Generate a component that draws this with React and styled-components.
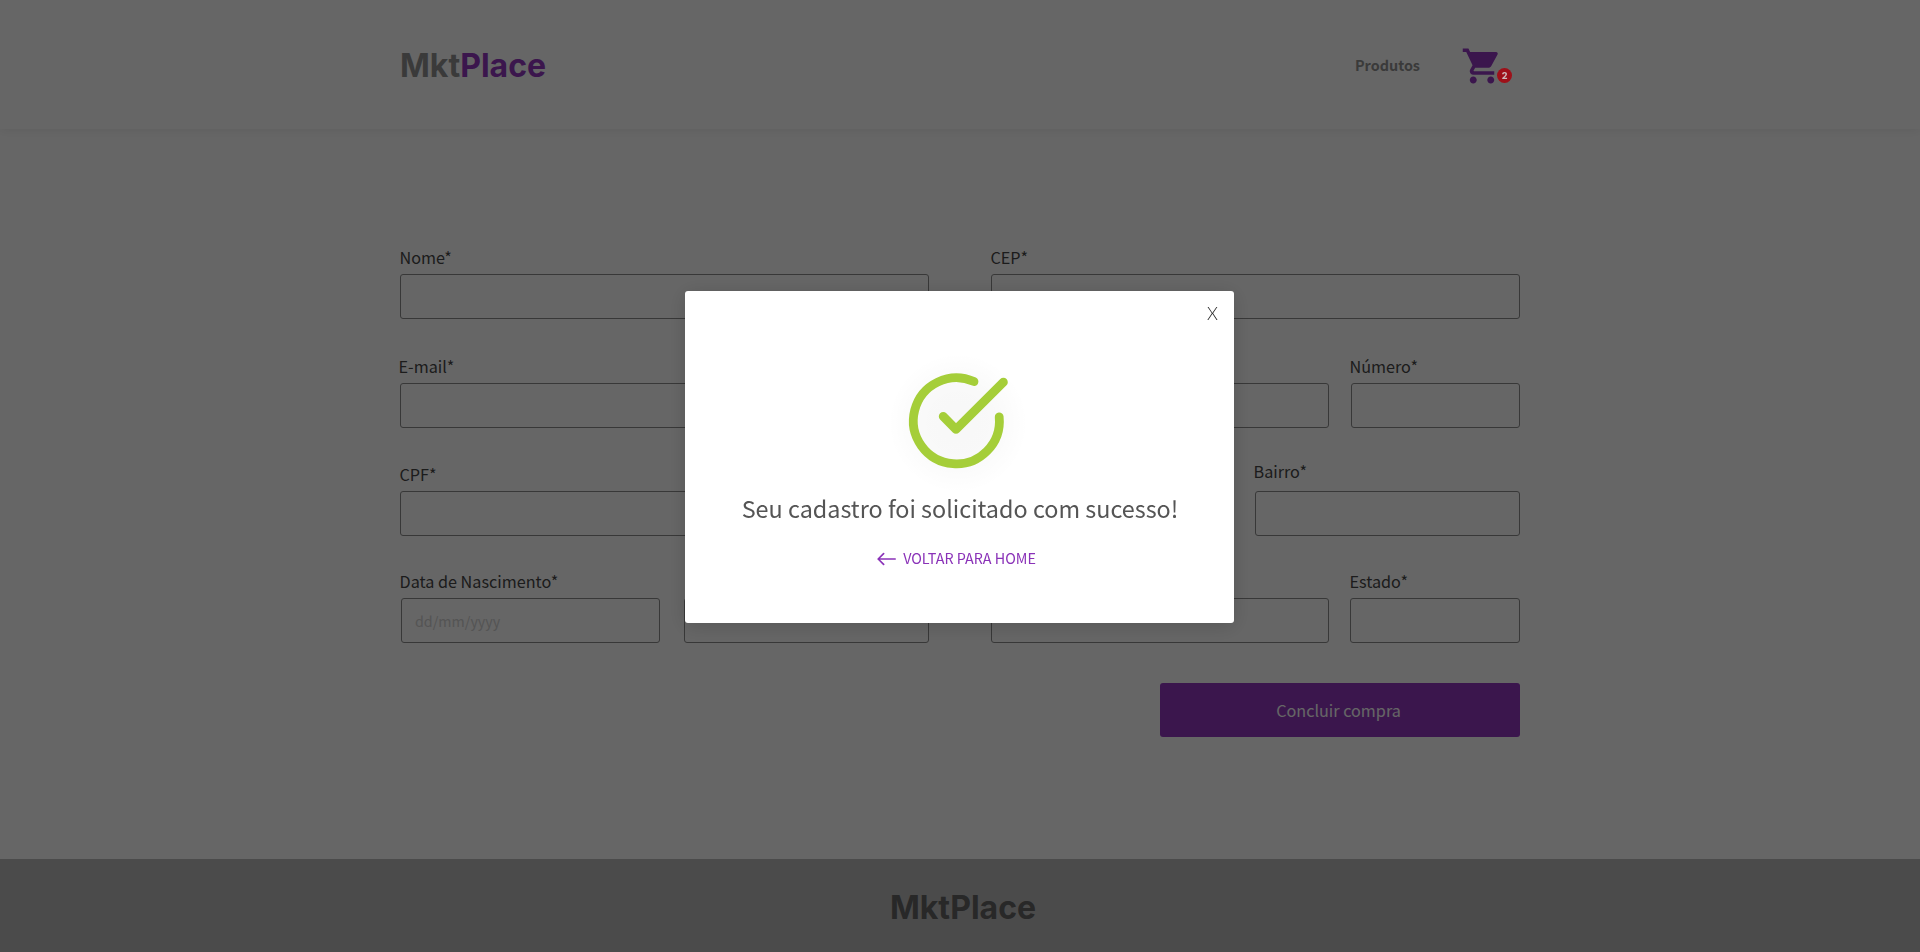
import React from "react";
import styled, { createGlobalStyle } from "styled-components";
import { MdShoppingCart } from "react-icons/md";

const GlobalStyle = createGlobalStyle`
  * { box-sizing: border-box; }
  body {
    margin: 0;
    background: #fff;
    color: #484848;
    font-family: "Noto Sans CJK SC", "Noto Sans", sans-serif;
  }
`;

const Page = styled.div`
  display: flex;
  flex-direction: column;
  height: 952px;
  overflow: hidden;
`;

const Header = styled.header`
  flex: none;
  height: 129px;
  box-shadow: 0 1px 10px rgba(0, 0, 0, 0.08);
`;

const HeaderContent = styled.div`
  display: flex;
  align-items: center;
  justify-content: space-between;
  width: 1120px;
  height: 131px;
  margin: 0 auto;
`;

const Logo = styled.div`
  font-family: Inter, sans-serif;
  font-weight: 700;
  font-size: 32px;
  line-height: 40px;
  color: ${(p) => (p.$muted ? "#646464" : "#929292")};
`;

const LogoAccent = styled.span`
  color: #9338c0;
`;

const Nav = styled.nav`
  display: flex;
  align-items: center;
  gap: 41px;
  padding: 0 8px 1px 0;
`;

const NavLink = styled.a`
  font-size: 14.4px;
  font-weight: 700;
  line-height: 22px;
  color: #929292;
`;

const Cart = styled.div`
  position: relative;
  width: 51px;
  height: 42px;
  margin-top: 1px;
  color: #9338c0;

  svg { display: block; }
`;

const CartBadge = styled.span`
  position: absolute;
  z-index: 3;
  top: 23px;
  left: 36px;
  width: 15px;
  height: 15px;
  border-radius: 50%;
  background: #9e1019;
  color: #cdb9ba;
  font-family: Inter, sans-serif;
  font-size: 9px;
  font-weight: 800;
  line-height: 15px;
  text-align: center;
`;

const Form = styled.form`
  flex: 1;
  width: 1120px;
  margin: 0 auto;
  padding-top: 118px;
`;

const FormRow = styled.div`
  display: grid;
  grid-template-columns: 529px 529px;
  column-gap: 62px;
  height: ${(p) => p.$height}px;
`;

const FieldGroup = styled.div`
  display: flex;
  align-items: flex-end;
  justify-content: space-between;
  height: 72px;
  padding-left: ${(p) => p.$inset || 0}px;
`;

const Field = styled.label`
  display: flex;
  flex-direction: column;
  gap: ${(p) => p.$gap || 7}px;
  width: ${(p) => p.$width || "100%"};
`;

const FieldLabel = styled.span`
  margin-left: ${(p) => p.$offset || 0}px;
  font-size: 16.2px;
  line-height: 20px;
  white-space: nowrap;
`;

const Input = styled.input`
  width: 100%;
  height: 45px;
  padding: 0 13px 1px;
  border: 1px solid #8c8c8c;
  border-radius: 3px;
  background: transparent;
  font-family: inherit;
  font-size: 14.3px;

  &::placeholder { color: #d2d2d2; opacity: 1; }
`;

const Actions = styled.div`
  display: flex;
  justify-content: flex-end;
`;

const SubmitButton = styled.button`
  width: 360px;
  height: 54px;
  padding: 0 3px 0 0;
  border: 0;
  border-radius: 3px;
  background: #9337c1;
  color: #fff;
  font-family: inherit;
  font-size: 16.2px;
`;

const Footer = styled.footer`
  display: flex;
  flex: none;
  align-items: center;
  justify-content: center;
  height: 93px;
  padding: 5px 0 0 6px;
  background: #bcbcbc;
`;

const Overlay = styled.div`
  position: fixed;
  inset: 0;
  z-index: 2;
  display: flex;
  align-items: flex-start;
  justify-content: center;
  padding: 291px 1px 0 0;
  background: rgba(0, 0, 0, 0.6);
`;

const Modal = styled.section`
  position: relative;
  display: flex;
  flex-direction: column;
  align-items: center;
  width: 549px;
  height: 332px;
  padding-top: 62px;
  border-radius: 3px;
  background: #fff;
  box-shadow: 0 3px 20px rgba(0, 0, 0, 0.16);
`;

const CloseButton = styled.button`
  position: absolute;
  top: 10px;
  right: 16px;
  padding: 0;
  border: 0;
  background: none;
  color: #262626;
  font-family: Lato, sans-serif;
  font-size: 17.5px;
  font-weight: 300;
  line-height: 25px;
`;

const SuccessIcon = styled.svg`
  display: block;
  flex: none;
  width: 160px;
  height: 140px;
  margin-right: 7px;
`;

const Title = styled.h1`
  margin: -2px 0 0 1px;
  font-size: 23.38px;
  font-weight: 400;
  line-height: 34px;
  color: #555;
  white-space: nowrap;
`;

const HomeLink = styled.a`
  display: flex;
  align-items: center;
  gap: 7px;
  margin-top: 21px;
  margin-right: 6px;
  font-size: 14.35px;
  line-height: 24px;
  color: #8a32b8;
  white-space: nowrap;

  svg { margin-top: 1px; }
`;

function CheckCircle() {
  return (
    <SuccessIcon viewBox="876 353 160 140" fill="none" stroke="#a5ce39" strokeWidth="8.8" strokeLinecap="round" strokeLinejoin="round">
      <defs>
        <radialGradient id="halo">
          <stop offset="0" stopColor="#000" stopOpacity="0.03" />
          <stop offset="0.5" stopColor="#000" stopOpacity="0.025" />
          <stop offset="1" stopColor="#000" stopOpacity="0" />
        </radialGradient>
      </defs>
      <circle cx="958" cy="423" r="70" fill="url(#halo)" stroke="none" />
      <path d="M974 381.6 A43 43 0 1 0 999.2 416.8" />
      <path d="M943.2 416.4 L956 429.4 L1003.4 382.2" />
    </SuccessIcon>
  );
}

function BackArrow() {
  return (
    <svg width="19" height="14" viewBox="0 0 19 14" fill="none" stroke="currentColor" strokeWidth="1.7" strokeLinecap="round" strokeLinejoin="round">
      <path d="M18.2 7H1.2M6.6 1.6L1.2 7L6.6 12.4" />
    </svg>
  );
}

function TextField({ label, offset, width, gap, placeholder }) {
  return (
    <Field $width={width} $gap={gap}>
      {label && <FieldLabel $offset={offset}>{label}</FieldLabel>}
      <Input placeholder={placeholder} />
    </Field>
  );
}

export default function App() {
  return (
    <>
      <GlobalStyle />
      <Page>
        <Header>
          <HeaderContent>
            <Logo>Mkt<LogoAccent>Place</LogoAccent></Logo>
            <Nav>
              <NavLink>Produtos</NavLink>
              <Cart>
                <MdShoppingCart size={42} />
                <CartBadge>2</CartBadge>
              </Cart>
            </Nav>
          </HeaderContent>
        </Header>

        <Form>
          <FormRow $height={109}>
            <FieldGroup><TextField label="Nome*" offset={-0.5} /></FieldGroup>
            <FieldGroup><TextField label="CEP*" offset={-0.5} /></FieldGroup>
          </FormRow>
          <FormRow $height={108}>
            <FieldGroup><TextField label="E-mail*" offset={-1.5} /></FieldGroup>
            <FieldGroup>
              <TextField width="338px" />
              <TextField label="Número*" offset={-1.5} width="169px" />
            </FieldGroup>
          </FormRow>
          <FormRow $height={107}>
            <FieldGroup><TextField label="CPF*" offset={-0.5} /></FieldGroup>
            <FieldGroup>
              <TextField width="243px" />
              <TextField label="Bairro*" offset={-1.5} width="265px" gap={10} />
            </FieldGroup>
          </FormRow>
          <FormRow $height={112}>
            <FieldGroup $inset={1}>
              <TextField label="Data de Nascimento*" offset={-1.5} width="259px" placeholder="dd/mm/yyyy" />
              <TextField width="245px" />
            </FieldGroup>
            <FieldGroup>
              <TextField width="338px" />
              <TextField label="Estado*" offset={-0.5} width="170px" />
            </FieldGroup>
          </FormRow>
          <Actions><SubmitButton type="button">Concluir compra</SubmitButton></Actions>
        </Form>

        <Footer><Logo $muted>MktPlace</Logo></Footer>
      </Page>
      <Overlay>
        <Modal role="dialog">
          <CloseButton>X</CloseButton>
          <CheckCircle />
          <Title>Seu cadastro foi solicitado com sucesso!</Title>
          <HomeLink><BackArrow />VOLTAR PARA HOME</HomeLink>
        </Modal>
      </Overlay>
    </>
  );
}
